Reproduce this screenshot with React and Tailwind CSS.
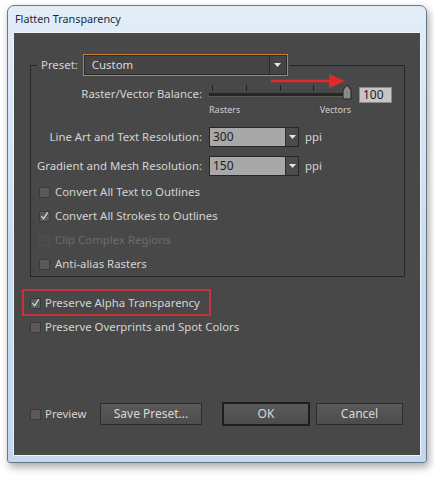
import { Fragment } from "react";

const font = { fontFamily: '"Noto Sans", "Open Sans", sans-serif' };

const Check = ({ checked, disabled }) => (
  <span
    className={`flex h-[11px] w-[11px] shrink-0 items-center justify-center border ${
      disabled ? "border-[#4e4e4e] bg-[#4a4a4a]" : "border-[#3a3a3a] bg-[#5a5a5a]"
    }`}
  >
    {checked && (
      <svg width="10" height="10" viewBox="0 0 10 10">
        <path d="M1.5 5 L4 8 L8.5 1" fill="none" stroke="#e2e2e2" strokeWidth="1.3" />
      </svg>
    )}
  </span>
);

const CheckRow = ({ label, checked, disabled, gap = "gap-[5px]" }) => (
  <div className={`flex h-[24px] items-center ${gap}`}>
    <Check checked={checked} disabled={disabled} />
    <span className={disabled ? "text-[#6c6c6c]" : "text-[#d4d4d4]"}>{label}</span>
  </div>
);

const Arrow = () => (
  <svg width="9" height="6" viewBox="0 0 9 6">
    <path d="M1 1 H8 L4.5 5 Z" fill="#e6e6e6" />
  </svg>
);

const Combo = ({ value }) => (
  <div className="flex h-[20px] w-[90px] border border-[#262626]">
    <div className="flex flex-1 items-center bg-[#a8a8a8] pl-[3px] text-[#1c1c1c]">{value}</div>
    <div className="flex w-[13px] items-center justify-center border-l border-[#2e2e2e] bg-[#4c4c4c]">
      <Arrow />
    </div>
  </div>
);

const Button = ({ label, className }) => (
  <button
    className={`flex items-center justify-center bg-gradient-to-b from-[#5a5a5a] to-[#4c4c4c] text-[12px] text-[#d8d8d8] ${className}`}
  >
    {label}
  </button>
);

export default function App() {
  const ticks = [3, 37, 71, 104];
  return (
    <div className="h-[477px] w-[434px] bg-white pl-[7px] pt-[5px] text-[11.4px] leading-[16px] whitespace-nowrap" style={font}>
      <div className="flex h-[458px] w-[420px] flex-col rounded-t-[7px] rounded-b-[3px] border border-[#6b7785] bg-gradient-to-b from-[#e2edf8] via-[#cbdef0] to-[#c3d8ee] shadow-[2px_4px_8px_rgba(0,0,0,0.35)]">
        <div className="flex h-[26px] items-center pl-[7px] text-[10.8px] text-[#1d2b3c]">Flatten Transparency</div>
        <div className="mx-[5px] mb-[6px] flex-1 border border-[#eef4fb] bg-[#484848]">
          <div className="flex h-full flex-col pl-[16px] pr-[15px] pt-[21px]">
            <fieldset className="m-0 border border-[#262626] p-0">
              <legend className="ml-[6px] flex items-center px-[2px]">
                <span className="ml-[2px] text-[#d4d4d4]">Preset:</span>
                <div className="ml-[5px] flex h-[22px] w-[205px] border border-[#c47f38] p-0">
                  <div className="flex flex-1 items-center border border-[#2a2a2a] border-r-0 bg-[#444444] pl-[7px] text-[#dadada]">
                    Custom
                  </div>
                  <div className="flex w-[18px] items-center justify-center border border-[#2a2a2a] bg-[#444444]">
                    <Arrow />
                  </div>
                </div>
              </legend>

              <div className="flex h-[44px]">
                <div className="w-[171px] pt-[10px] text-right text-[#d4d4d4]">Raster/Vector Balance:</div>
                <div className="relative ml-[7px] w-[145px]">
                  <svg width="145" height="26" viewBox="0 0 145 26">
                    {ticks.map((x) => (
                      <line key={x} x1={x + 0.5} y1="9" x2={x + 0.5} y2="15" stroke="#222" strokeWidth="1" />
                    ))}
                    <rect x="0" y="17" width="140" height="3" fill="#262626" />
                    <rect x="0" y="20" width="140" height="1" fill="#5a5a5a" />
                    <path d="M134 23 V14 L138 9 L142 14 V23 Z" fill="#8a8a8a" stroke="#202020" strokeWidth="1" />
                  </svg>
                  <div className="mt-[2px] flex w-[142px] justify-between text-[9px] leading-[12px] text-[#cfcfcf]">
                    <span>Rasters</span>
                    <span>Vectors</span>
                  </div>
                  <svg className="absolute left-[60px] top-[-4px]" width="80" height="18" viewBox="0 0 80 18">
                    <path d="M2 9 H66" stroke="#e02a2a" strokeWidth="2.5" />
                    <path d="M60 2 L76 9 L60 16 Z" fill="#e02a2a" />
                  </svg>
                </div>
                <div className="ml-[5px] mt-[11px] flex h-[16px] w-[33px] items-center border border-[#8a8a8a] bg-[#c6c6c6] pl-[3px] text-[12px] text-[#1c1c1c]">
                  100
                </div>
              </div>

              {[
                ["Line Art and Text Resolution:", "300", "mt-[7px]"],
                ["Gradient and Mesh Resolution:", "150", "mt-[9px]"],
              ].map(([label, value, mt]) => (
                <div key={label} className={`flex h-[20px] items-center ${mt}`}>
                  <div className="w-[171px] text-right text-[#d4d4d4]">{label}</div>
                  <div className="ml-[7px] text-[12px]">
                    <Combo value={value} />
                  </div>
                  <span className="ml-[6px] text-[#d4d4d4]">ppi</span>
                </div>
              ))}

              <div className="mt-[4px] pl-[8px]">
                <CheckRow label="Convert All Text to Outlines" />
                <CheckRow label="Convert All Strokes to Outlines" checked />
                <CheckRow label="Clip Complex Regions" disabled />
                <CheckRow label="Anti-alias Rasters" />
              </div>
            </fieldset>

            <div className="relative mt-[14px]">
              <div className="absolute left-[-8px] top-[-2px] h-[27px] w-[189px] border-2 border-[#c8323c]" />
              <CheckRow label="Preserve Alpha Transparency" checked gap="gap-[4px]" />
            </div>
            <CheckRow label="Preserve Overprints and Spot Colors" gap="gap-[4px]" />

            <div className="mt-[63px] flex h-[24px] items-center">
              <div className="flex w-[70px] items-center gap-[4px]">
                <Check />
                <span className="text-[#d4d4d4]">Preview</span>
              </div>
              <Button label="Save Preset..." className="h-[22px] w-[102px] border border-[#2c2c2c]" />
              <Button label="OK" className="ml-[20px] h-[24px] w-[88px] border-2 border-[#1e1e1e]" />
              <Button label="Cancel" className="ml-[6px] h-[22px] w-[87px] border border-[#2c2c2c]" />
            </div>
          </div>
        </div>
      </div>
    </div>
  );
}
